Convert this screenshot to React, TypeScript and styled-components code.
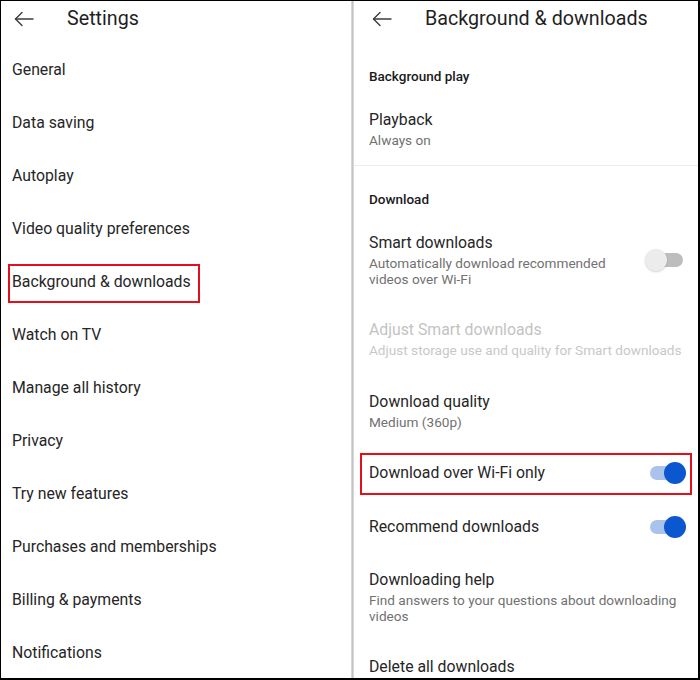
import React from "react";
import styled, { createGlobalStyle } from "styled-components";

const Global = createGlobalStyle`
  html, body { margin: 0; padding: 0; background: #fff; }
  body { font-family: Roboto, "Noto Sans", "Liberation Sans", sans-serif; -webkit-font-smoothing: antialiased; }
  * { box-sizing: border-box; }
`;

const Frame = styled.div`
  width: 700px;
  height: 680px;
  display: grid;
  grid-template-columns: 350px 3px 1fr;
  border-top: 1px solid #000;
  border-left: 1px solid #000;
  border-right: 2px solid #000;
  border-bottom: 2px solid #000;
  overflow: hidden;
  background: #fff;
  color: #262626;
`;

const Divider = styled.div`
  background: linear-gradient(to right, #e2e2e2, #c4c4c4 50%, #e2e2e2);
`;

const Panel = styled.section`
  display: flex;
  flex-direction: column;
  overflow: hidden;
`;

const Header = styled.header<{ $gap: number; $pad: number }>`
  height: 42px;
  flex: none;
  display: flex;
  align-items: flex-start;
  padding: 6px 0 0 ${(p) => p.$pad}px;
  gap: ${(p) => p.$gap}px;
`;

const BackButton = styled.span`
  width: 20px;
  height: 24px;
  display: flex;
  align-items: center;
  color: #3c3c3c;
`;

const Title = styled.h1`
  margin: 0;
  font-size: 19.7px;
  line-height: 24px;
  font-weight: 400;
  color: #1f1f1f;
`;

const MenuList = styled.ul`
  list-style: none;
  margin: 0;
  padding: 0 0 0 11px;
`;

const MenuItem = styled.li`
  height: 53px;
  display: flex;
  align-items: center;
  font-size: 15.8px;
  line-height: 20px;
  color: #262626;
`;

const Highlight = styled.span`
  position: relative;
  &::after {
    content: "";
    position: absolute;
    left: -4px;
    right: -9px;
    top: -8px;
    bottom: -11px;
    border: 2px solid #e3101c;
  }
`;

const SectionLabel = styled.div`
  padding: 24px 16px 8.5px 15px;
  font-size: 13.5px;
  line-height: 18px;
  font-weight: 500;
  color: #1a1a1a;
`;

const Row = styled.div<{ $boxed?: boolean; $rule?: boolean }>`
  position: relative;
  display: flex;
  align-items: center;
  padding: 16.7px 11px 16.7px 15px;
  gap: 12px;
  border-bottom: ${(p) => (p.$rule ? "1px solid #ececec" : "none")};
  ${(p) =>
    p.$boxed &&
    `&::after {
      content: "";
      position: absolute;
      left: 6px;
      right: 6px;
      top: 6.5px;
      bottom: 4.5px;
      border: 2px solid #e3101c;
    }`}
`;

const RowText = styled.div`
  flex: 1;
  min-width: 0;
`;

const RowTitle = styled.div<{ $disabled?: boolean }>`
  font-size: 15.8px;
  line-height: 20px;
  color: ${(p) => (p.$disabled ? "#c3c3c3" : "#262626")};
`;

const RowSub = styled.div<{ $disabled?: boolean; $wrapAt?: number }>`
  margin-top: 2px;
  font-size: 13.6px;
  line-height: 16px;
  color: ${(p) => (p.$disabled ? "#c8c8c8" : "#717171")};
  max-width: ${(p) => (p.$wrapAt ? `${p.$wrapAt}px` : "none")};
  white-space: ${(p) => (p.$wrapAt ? "normal" : "nowrap")};
`;

const Switch = styled.span<{ $on?: boolean }>`
  position: relative;
  flex: none;
  width: 42px;
  height: 20px;
  &::before {
    content: "";
    position: absolute;
    left: 5px;
    right: 4px;
    top: 3px;
    height: 14px;
    border-radius: 7px;
    background: ${(p) => (p.$on ? "#a9c3ec" : "#bdbdbd")};
  }
  &::after {
    content: "";
    position: absolute;
    top: -1px;
    ${(p) => (p.$on ? "right: 1px;" : "left: 0;")}
    width: 22px;
    height: 22px;
    border-radius: 50%;
    background: ${(p) => (p.$on ? "#0b57cf" : "#ececec")};
    box-shadow: ${(p) => (p.$on ? "none" : "0 1px 2px rgba(0,0,0,0.18)")};
  }
`;

const Arrow = () => (
  <svg width="20" height="16" viewBox="0 0 20 16" fill="none" stroke="currentColor" strokeWidth="1.4" strokeLinecap="round" strokeLinejoin="round">
    <path d="M19 8H1.5" />
    <path d="M8 1.5L1.5 8L8 14.5" />
  </svg>
);

const menu = [
  "General",
  "Data saving",
  "Autoplay",
  "Video quality preferences",
  "Background & downloads",
  "Watch on TV",
  "Manage all history",
  "Privacy",
  "Try new features",
  "Purchases and memberships",
  "Billing & payments",
  "Notifications",
];

export default function App() {
  return (
    <>
      <Global />
      <Frame>
        <Panel>
          <Header $gap={33} $pad={13}>
            <BackButton><Arrow /></BackButton>
            <Title>Settings</Title>
          </Header>
          <MenuList>
            {menu.map((m) => (
              <MenuItem key={m}>
                {m === "Background & downloads" ? <Highlight>{m}</Highlight> : m}
              </MenuItem>
            ))}
          </MenuList>
        </Panel>
        <Divider />
        <Panel>
          <Header $gap={33} $pad={18}>
            <BackButton><Arrow /></BackButton>
            <Title>Background &amp; downloads</Title>
          </Header>
          <SectionLabel>Background play</SectionLabel>
          <Row $rule>
            <RowText>
              <RowTitle>Playback</RowTitle>
              <RowSub>Always on</RowSub>
            </RowText>
          </Row>
          <SectionLabel>Download</SectionLabel>
          <Row>
            <RowText>
              <RowTitle>Smart downloads</RowTitle>
              <RowSub $wrapAt={250}>Automatically download recommended videos over Wi-Fi</RowSub>
            </RowText>
            <Switch />
          </Row>
          <Row>
            <RowText>
              <RowTitle $disabled>Adjust Smart downloads</RowTitle>
              <RowSub $disabled>Adjust storage use and quality for Smart downloads</RowSub>
            </RowText>
          </Row>
          <Row>
            <RowText>
              <RowTitle>Download quality</RowTitle>
              <RowSub>Medium (360p)</RowSub>
            </RowText>
          </Row>
          <Row $boxed>
            <RowText>
              <RowTitle>Download over Wi-Fi only</RowTitle>
            </RowText>
            <Switch $on />
          </Row>
          <Row>
            <RowText>
              <RowTitle>Recommend downloads</RowTitle>
            </RowText>
            <Switch $on />
          </Row>
          <Row>
            <RowText>
              <RowTitle>Downloading help</RowTitle>
              <RowSub $wrapAt={320}>Find answers to your questions about downloading videos</RowSub>
            </RowText>
          </Row>
          <Row>
            <RowText>
              <RowTitle>Delete all downloads</RowTitle>
            </RowText>
          </Row>
        </Panel>
      </Frame>
    </>
  );
}
